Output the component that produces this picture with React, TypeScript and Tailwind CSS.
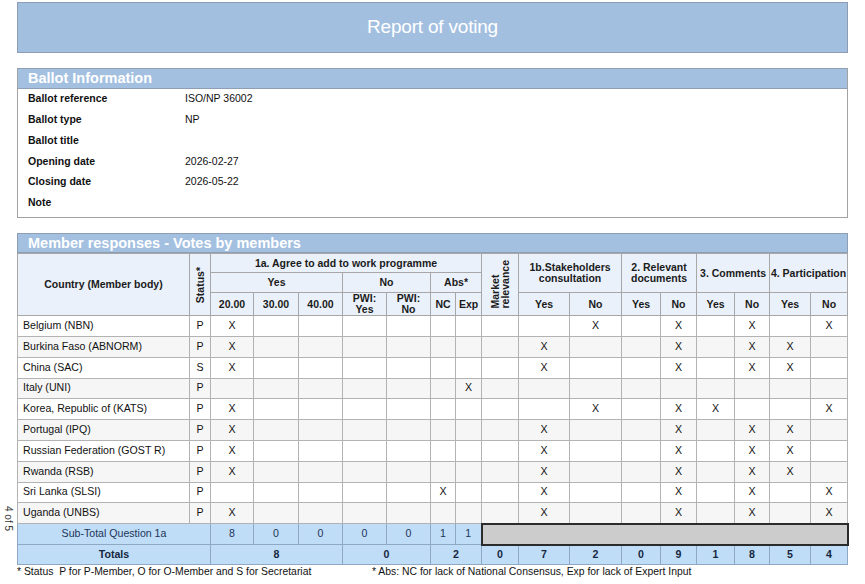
import React from 'react';

type Row = { name: string; status: string; marks: number[] };

// column indexes: 0..6 = 1a (20,30,40,PWI yes,PWI no,NC,Exp), 7 = market,
// 8,9 = 1b, 10,11 = docs, 12,13 = comments, 14,15 = participation
const rows: Row[] = [
  { name: 'Belgium (NBN)', status: 'P', marks: [0, 9, 11, 13, 15] },
  { name: 'Burkina Faso (ABNORM)', status: 'P', marks: [0, 8, 11, 13, 14] },
  { name: 'China (SAC)', status: 'S', marks: [0, 8, 11, 13, 14] },
  { name: 'Italy (UNI)', status: 'P', marks: [6] },
  { name: 'Korea, Republic of (KATS)', status: 'P', marks: [0, 9, 11, 12, 15] },
  { name: 'Portugal (IPQ)', status: 'P', marks: [0, 8, 11, 13, 14] },
  { name: 'Russian Federation (GOST R)', status: 'P', marks: [0, 8, 11, 13, 14] },
  { name: 'Rwanda (RSB)', status: 'P', marks: [0, 8, 11, 13, 14] },
  { name: 'Sri Lanka (SLSI)', status: 'P', marks: [5, 8, 11, 13, 15] },
  { name: 'Uganda (UNBS)', status: 'P', marks: [0, 8, 11, 13, 15] },
];

const colWidths = [172, 21, 43, 45, 44, 44, 44, 25, 26, 37, 51, 52, 39, 36, 38, 35, 41, 37];

const ballotInfo: [string, string][] = [
  ['Ballot reference', 'ISO/NP 36002'],
  ['Ballot type', 'NP'],
  ['Ballot title', ''],
  ['Opening date', '2026-02-27'],
  ['Closing date', '2026-05-22'],
  ['Note', ''],
];

const th = 'border border-[#a7a7a7] bg-[#eaf1fa] font-bold text-[10.5px] text-[#1b1b1b] text-center leading-[11px] p-0 whitespace-nowrap';
const td = 'border border-[#b3b3b3] text-[10.6px] text-center p-0';
const sub = 'border border-[#8fa8c4] bg-[#c0ddf7] text-[10.6px] text-center text-[#1c3558] p-0';
const tot = 'border border-[#8fa8c4] bg-[#c0ddf7] text-[10.6px] text-center font-bold text-[#15263f] p-0';

function SectionTitle({ children, tall }: { children: React.ReactNode; tall?: boolean }) {
  return (
    <div className={`${tall ? 'h-[20px]' : 'h-[19px]'} bg-[#a3c0e1] border-b border-[#8e9fb5] px-[10px] text-white font-bold text-[14.5px] leading-[18px]`}>
      {children}
    </div>
  );
}

export default function App() {
  return (
    <div className="relative w-[865px] h-[584px] bg-white overflow-hidden font-['Liberation_Sans',Arial,sans-serif] text-[#111]">
      <div className="absolute left-[1px] top-[506px] text-[10px] text-[#333] [writing-mode:vertical-rl]">4 of 5</div>

      <div className="pl-[17px] pt-[2px] w-[848px]">
        <div className="h-[51px] bg-[#a3bfe0] border border-[#8c9cb2] flex items-center justify-center text-white text-[19px] tracking-[-0.2px]">
          Report of voting
        </div>

        <div className="mt-[15px] border border-[#a2a2a2] border-t-[#8e9fb5]">
          <SectionTitle tall>Ballot Information</SectionTitle>
          <div className="pb-[4px]">
            {ballotInfo.map(([k, v]) => (
              <div key={k} className="flex h-[20.7px] items-center text-[10.5px]">
                <div className="w-[167px] pl-[10px] font-bold">{k}</div>
                <div>{v}</div>
              </div>
            ))}
          </div>
        </div>

        <div className="mt-[15px] border-x border-t border-[#8e9fb5]">
          <SectionTitle>Member responses - Votes by members</SectionTitle>
        </div>
        <table className="table-fixed border-collapse w-[830px]">
          <colgroup>
            {colWidths.map((w, i) => (
              <col key={i} style={{ width: w }} />
            ))}
          </colgroup>
          <thead>
            <tr className="h-[19px]">
              <th rowSpan={3} className={th}>Country (Member body)</th>
              <th rowSpan={3} className={th}>
                <span className="inline-block align-middle [writing-mode:vertical-rl] rotate-180">Status*</span>
              </th>
              <th colSpan={7} className={th}>1a. Agree to add to work programme</th>
              <th rowSpan={3} className={th}>
                <span className="inline-block align-middle [writing-mode:vertical-rl] rotate-180 leading-[10px] text-left">
                  Market<br />relevance
                </span>
              </th>
              <th colSpan={2} rowSpan={2} className={th}>1b.Stakeholders<br />consultation</th>
              <th colSpan={2} rowSpan={2} className={th}>2. Relevant<br />documents</th>
              <th colSpan={2} rowSpan={2} className={th}>3. Comments</th>
              <th colSpan={2} rowSpan={2} className={th}>4. Participation</th>
            </tr>
            <tr className="h-[20px]">
              <th colSpan={3} className={th}>Yes</th>
              <th colSpan={2} className={th}>No</th>
              <th colSpan={2} className={th}>Abs*</th>
            </tr>
            <tr className="h-[20px]">
              <th className={th}>20.00</th>
              <th className={th}>30.00</th>
              <th className={th}>40.00</th>
              <th className={th}>PWI:<br />Yes</th>
              <th className={th}>PWI:<br />No</th>
              <th className={th}>NC</th>
              <th className={th}>Exp</th>
              {['Yes', 'No', 'Yes', 'No', 'Yes', 'No', 'Yes', 'No'].map((t, i) => (
                <th key={i} className={th}>{t}</th>
              ))}
            </tr>
          </thead>
          <tbody>
            {rows.map((r, ri) => (
              <tr key={r.name} className={`h-[20.8px] ${ri % 2 === 1 ? 'bg-[#f6f6f6]' : 'bg-white'}`}>
                <td className={`${td} text-left pl-[5px]`}>{r.name}</td>
                <td className={td}>{r.status}</td>
                {Array.from({ length: 16 }, (_, ci) => (
                  <td key={ci} className={td}>{r.marks.includes(ci) ? 'X' : ''}</td>
                ))}
              </tr>
            ))}
            <tr className="h-[21px]">
              <td colSpan={2} className={sub}>Sub-Total Question 1a</td>
              {[8, 0, 0, 0, 0, 1, 1].map((n, i) => (
                <td key={i} className={sub}>{n}</td>
              ))}
              <td colSpan={9} className="border-2 border-[#2b2b2b] bg-[#cccccc] p-0"></td>
            </tr>
            <tr className="h-[20px]">
              <td colSpan={2} className={tot}>Totals</td>
              <td colSpan={3} className={tot}>8</td>
              <td colSpan={2} className={tot}>0</td>
              <td colSpan={2} className={tot}>2</td>
              {[0, 7, 2, 0, 9, 1, 8, 5, 4].map((n, i) => (
                <td key={i} className={tot}>{n}</td>
              ))}
            </tr>
          </tbody>
        </table>
        <div className="flex text-[10.4px] leading-[13px] text-[#111]">
          <div className="w-[355px] whitespace-pre">* Status  P for P-Member, O for O-Member and S for Secretariat</div>
          <div>* Abs: NC for lack of National Consensus, Exp for lack of Expert Input</div>
        </div>
      </div>
    </div>
  );
}
